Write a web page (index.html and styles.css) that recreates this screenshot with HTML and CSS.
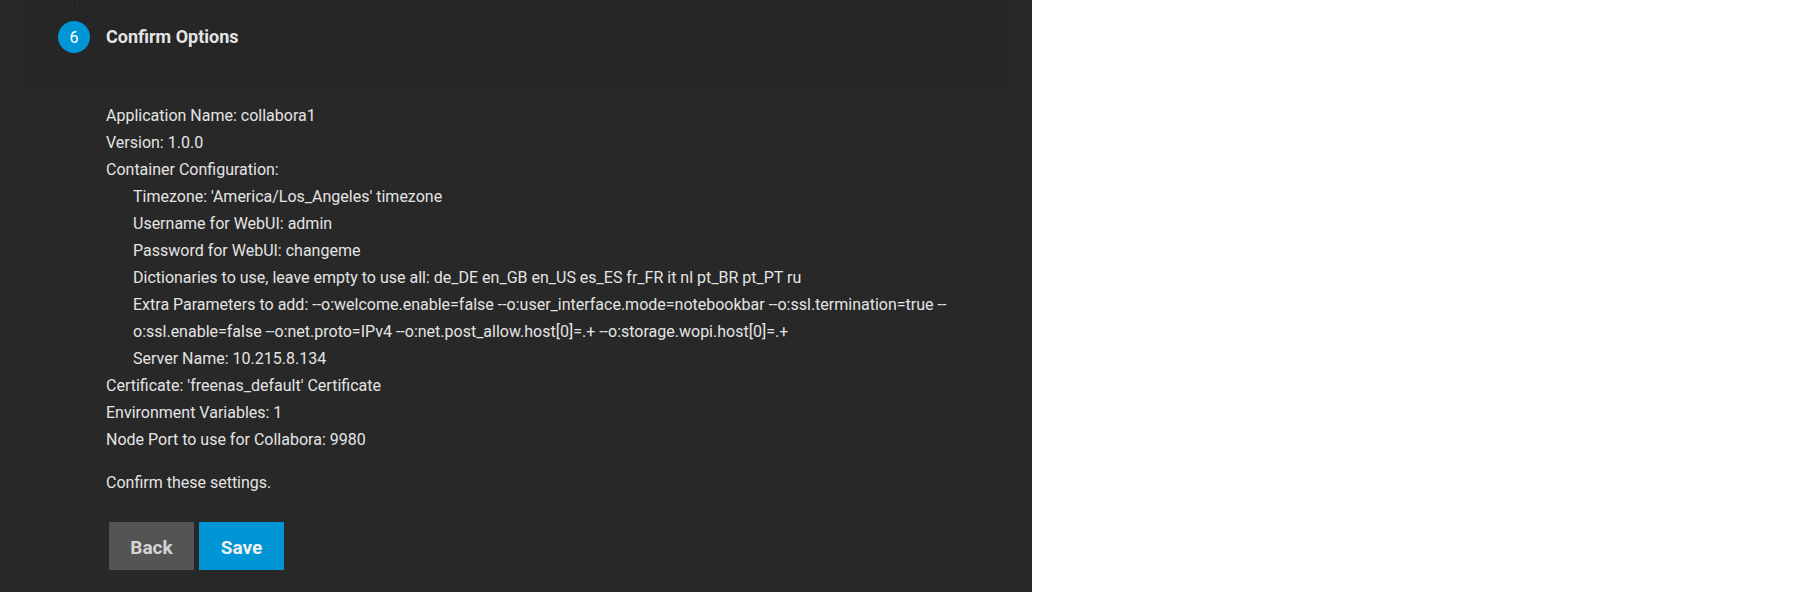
FILE: index.html
```html
<!DOCTYPE html>
<html lang="en">
<head>
<meta charset="utf-8">
<title>Confirm Options</title>
<link rel="stylesheet" href="styles.css">
</head>
<body>
<main class="panel">
  <header class="step">
    <span class="step-number">6</span>
    <h1 class="step-title">Confirm Options</h1>
  </header>
  <section class="content">
    <ul class="summary">
      <li>Application Name: collabora1</li>
      <li>Version: 1.0.0</li>
      <li>Container Configuration:
        <ul class="nested">
          <li>Timezone: 'America/Los_Angeles' timezone</li>
          <li>Username for WebUI: admin</li>
          <li>Password for WebUI: changeme</li>
          <li>Dictionaries to use, leave empty to use all: de_DE en_GB en_US es_ES fr_FR it nl pt_BR pt_PT ru</li>
          <li>Extra Parameters to add: --o:welcome.enable=false --o:user_interface.mode=notebookbar --o:ssl.termination=true --<wbr>o:ssl.enable=false --o:net.proto=IPv4 --o:net.post_allow.host[0]=.+ --o:storage.wopi.host[0]=.+</li>
          <li>Server Name: 10.215.8.134</li>
        </ul>
      </li>
      <li>Certificate: 'freenas_default' Certificate</li>
      <li>Environment Variables: 1</li>
      <li>Node Port to use for Collabora: 9980</li>
    </ul>
    <p class="confirm">Confirm these settings.</p>
    <div class="actions">
      <button class="button" type="button">Back</button>
      <button class="button primary" type="button">Save</button>
    </div>
  </section>
</main>
</body>
</html>
```
FILE: styles.css
```css
* { box-sizing: border-box; }
body {
  margin: 0;
  background: #fff;
  font-family: Roboto, "Liberation Sans", sans-serif;
}
.panel {
  width: 57.33%;
  min-height: 100vh;
  padding: 0 26px 22px;
  border-bottom: 1px solid #222;
  background: #282828;
  color: #e4e4e4;
}
.step {
  position: relative;
  display: flex;
  align-items: center;
  gap: 16px;
  padding: 21px 32px 32px;
  background: #262626;
}
/* Connector from the previous step */
.step::before {
  content: "";
  position: absolute;
  top: 0;
  left: 48px;
  width: 1px;
  height: 9px;
  background: #1e1e1e;
}
.step-number {
  display: grid;
  place-items: center;
  width: 32px;
  height: 32px;
  border-radius: 50%;
  background: #0095d5;
  color: #fff;
  font-size: 16px;
}
.step-title { margin: 0; font-size: 18px; font-weight: 700; line-height: 24px; }
.content { padding: 17px 40px 0 80px; font-size: 16px; line-height: 27px; }
.summary, .nested { margin: 0; padding: 0; list-style: none; }
.nested { padding-left: 27px; }
.confirm { margin: 16px 0 0; }
.actions { display: flex; gap: 5px; margin-top: 26px; padding-left: 3px; }
.button {
  width: 85px;
  height: 48px;
  padding: 2px 0 0;
  border: 0;
  background: #545454;
  color: #d4d4d4;
  font: 700 19px Roboto, "Liberation Sans", sans-serif;
}
.primary { background: #0095d5; color: #f0f0f0; }
```
